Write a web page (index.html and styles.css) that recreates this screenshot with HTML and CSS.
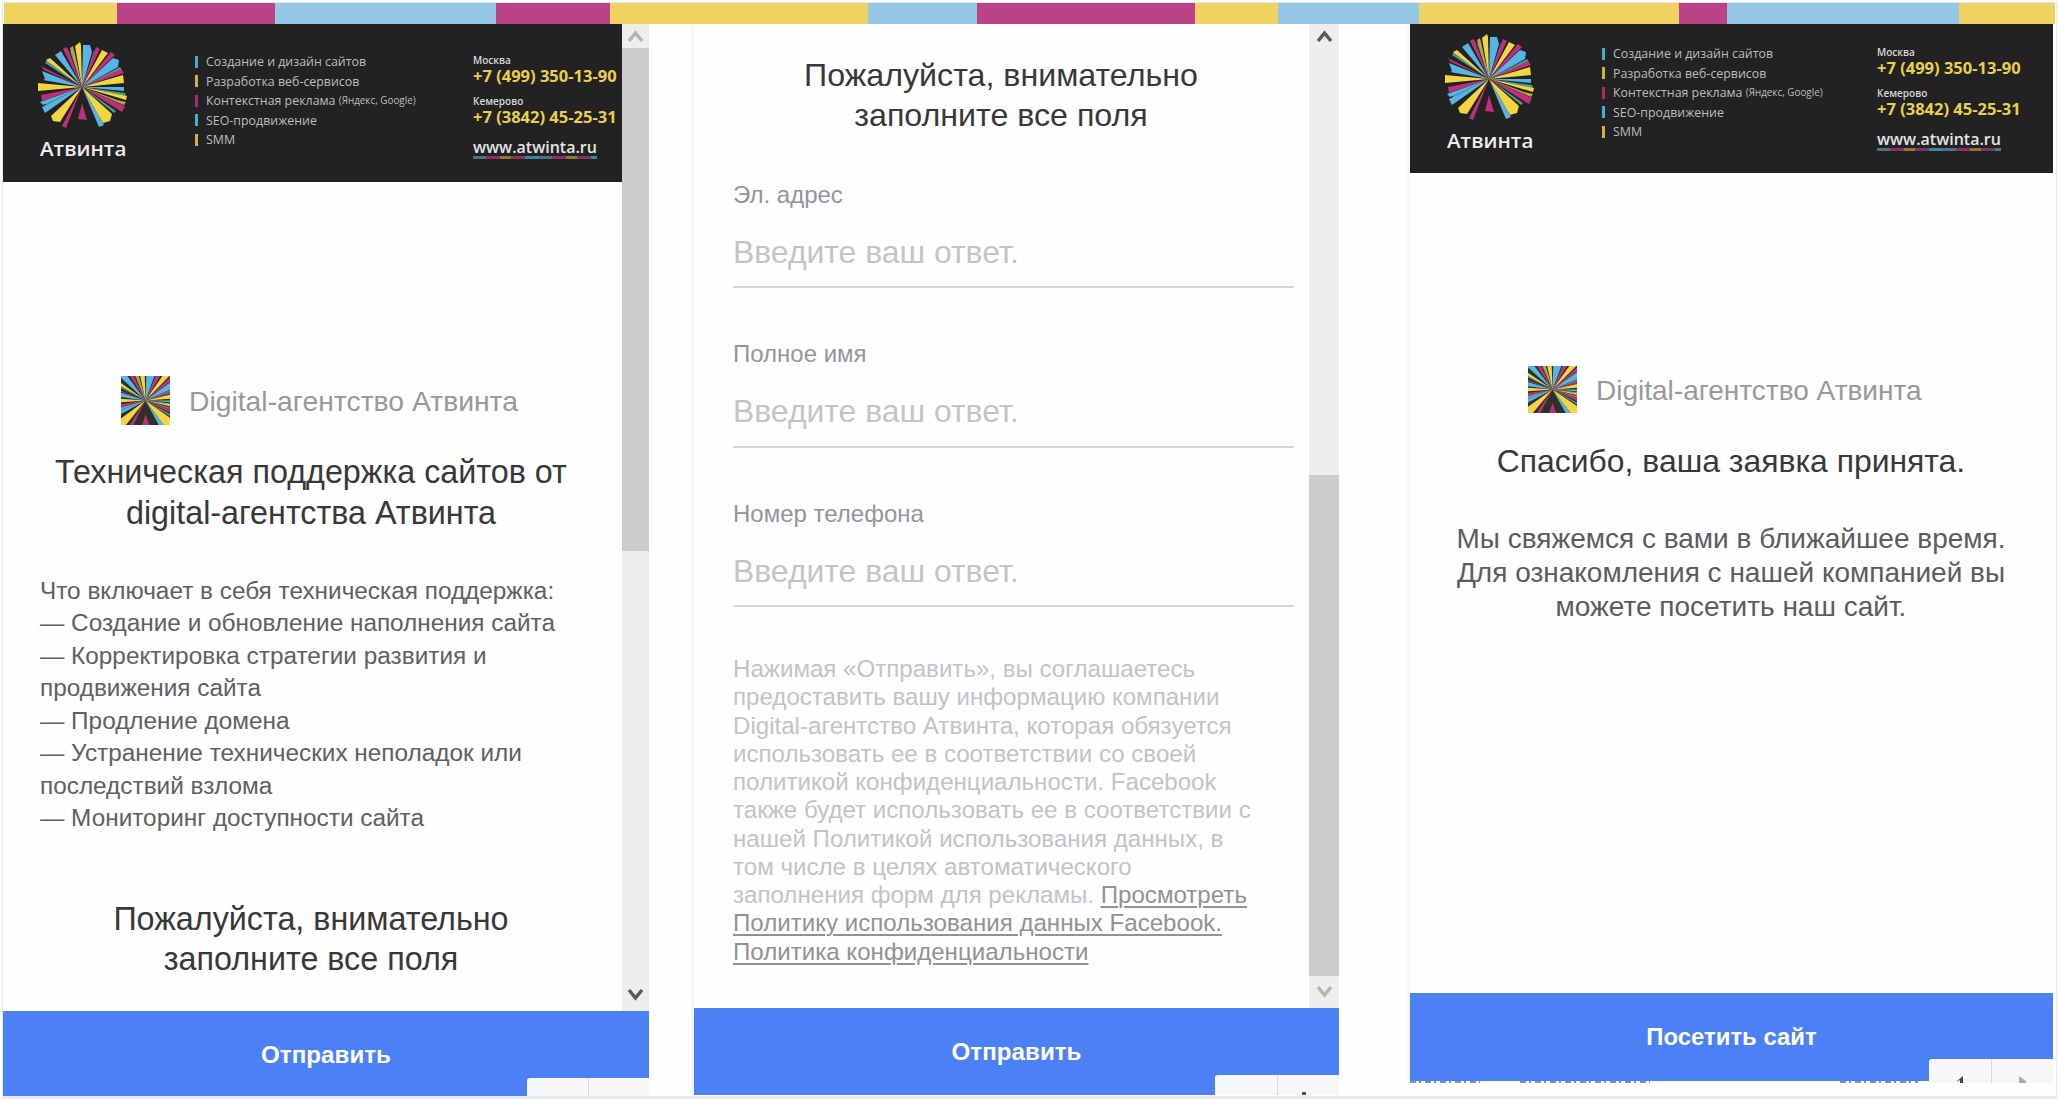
FILE: index.html
```html
<!DOCTYPE html>
<html lang="ru">
  <head>
    <meta charset="UTF-8" />
    <meta name="viewport" content="width=device-width, initial-scale=1.0" />
    <title>Digital-агентство Атвинта</title>
    <link rel="stylesheet" href="styles.css">
  </head>
  <body>
    <!-- Shared logo rays -->
    <svg class="defs" width="0" height="0">
      <symbol id="rays" viewBox="-46 -46 92 92">
        <path fill="#4f9a8a" d="M0 0L-12 -36L-8 -37ZM0 0L12 -36L14 -35ZM0 0L38 -20L40 -17ZM0 0L43 6L44 9ZM0 0L-37 -24L-35 -27ZM0 0L-37 16L-36 18ZM0 0L34 24L32 26Z"/>
        <path fill="#57b5e6" d="M0 0L1 -42L8 -42L10 -35ZM0 0L-27 -32L-21 -36ZM0 0L31 -29L37 -27L36 -20ZM0 0L-40 -16L-37 -8L-39 -7ZM0 0L42 0L42 4ZM0 0L-40 20L-37 26ZM0 0L-42 15L-39 18ZM0 0L17 40L22 38Z"/>
        <path fill="#f2d541" d="M0 0L-7 -41L-2 -45L-1 -42ZM0 0L20 -37L26 -34ZM0 0L-36 -27L-32 -29ZM0 0L41 -12L42 -4ZM0 0L-44 -4L-44 4ZM0 0L45 9L44 13ZM0 0L-31 29L-29 34L-22 35ZM0 0L21 36L28 34L30 27Z"/>
        <path fill="#b8a83c" d="M0 0L-12 -39L-9 -41ZM0 0L35 13L44 15L42 18Z"/>
        <path fill="#bd2f7c" d="M0 0L-19 -38L-16 -40L-14 -38ZM0 0L14 -40L18 -38ZM0 0L29 -35L33 -32ZM0 0L39 -18L42 -14ZM0 0L-41 -21L-38 -17ZM0 0L-41 8L-40 14ZM0 0L43 19L40 25ZM0 0L-20 39L-16 41ZM0 16L-4 32L5 33Z"/>
      </symbol>
    </svg>

    <div class="board">
      <div class="stripe">
        <i class="yellow" style="flex-grow: 113"></i>
        <i class="pink" style="flex-grow: 158"></i>
        <i class="blue" style="flex-grow: 221"></i>
        <i class="pink" style="flex-grow: 114"></i>
        <i class="yellow" style="flex-grow: 258"></i>
        <i class="blue" style="flex-grow: 109"></i>
        <i class="pink" style="flex-grow: 219"></i>
        <i class="yellow" style="flex-grow: 83"></i>
        <i class="blue" style="flex-grow: 141"></i>
        <i class="yellow" style="flex-grow: 260"></i>
        <i class="pink" style="flex-grow: 48"></i>
        <i class="blue" style="flex-grow: 232"></i>
        <i class="yellow" style="flex-grow: 96"></i>
      </div>

      <div class="screens">
        <!-- Screen 1: offer -->
        <section class="screen screen-offer">
          <div class="viewport">
            <div class="content">
              <header class="banner">
                <div class="logo">
                  <svg width="94" height="92"><use href="#rays"/></svg>
                  <span>Атвинта</span>
                </div>
                <ul class="services">
                  <li class="c-blue">Создание и дизайн сайтов</li>
                  <li class="c-yellow">Разработка веб-сервисов</li>
                  <li class="c-pink">Контекстная реклама <small>(Яндекс, Google)</small></li>
                  <li class="c-blue">SEO-продвижение</li>
                  <li class="c-yellow">SMM</li>
                </ul>
                <div class="contacts">
                  <span class="city">Москва</span>
                  <span class="phone">+7 (499) 350-13-90</span>
                  <span class="city">Кемерово</span>
                  <span class="phone">+7 (3842) 45-25-31</span>
                  <span class="site">www.atwinta.ru</span>
                </div>
              </header>
              <div class="brand">
                <svg class="brand-icon" viewBox="-22 -28 44 56" preserveAspectRatio="none"><use href="#rays" x="-46" y="-46" width="92" height="92"/></svg>
                <span>Digital-агентство Атвинта</span>
              </div>
              <h1>Техническая поддержка сайтов от<br>digital-агентства Атвинта</h1>
              <p class="details">
                Что включает в себя техническая поддержка:<br>
                — Создание и обновление наполнения сайта<br>
                — Корректировка стратегии развития и<br>
                продвижения сайта<br>
                — Продление домена<br>
                — Устранение технических неполадок или<br>
                последствий взлома<br>
                — Мониторинг доступности сайта
              </p>
              <h2>Пожалуйста, внимательно<br>заполните все поля</h2>
            </div>
            <div class="scrollbar">
              <span class="arrow muted"><svg width="17" height="14" viewBox="0 0 17 14"><path d="M2 12L8.500 4L15 12"/></svg></span>
              <span class="thumb"></span>
              <span class="arrow"><svg width="17" height="14" viewBox="0 0 17 14"><path d="M2 2L8.500 10L15 2"/></svg></span>
            </div>
          </div>
          <div class="submit">Отправить
            <div class="pager"><span></span><span></span></div>
          </div>
        </section>

        <!-- Screen 2: form -->
        <section class="screen screen-form">
          <div class="viewport">
            <div class="content">
              <h2>Пожалуйста, внимательно<br>заполните все поля</h2>
              <div class="field">
                <label>Эл. адрес</label>
                <div class="input">Введите ваш ответ.</div>
              </div>
              <div class="field">
                <label>Полное имя</label>
                <div class="input">Введите ваш ответ.</div>
              </div>
              <div class="field">
                <label>Номер телефона</label>
                <div class="input">Введите ваш ответ.</div>
              </div>
              <p class="terms">
                Нажимая «Отправить», вы соглашаетесь<br>
                предоставить вашу информацию компании<br>
                Digital-агентство Атвинта, которая обязуется<br>
                использовать ее в соответствии со своей<br>
                политикой конфиденциальности. Facebook<br>
                также будет использовать ее в соответствии с<br>
                нашей Политикой использования данных, в<br>
                том числе в целях автоматического<br>
                заполнения форм для рекламы. <a href="#">Просмотреть<br>
                Политику использования данных Facebook.</a><br>
                <a href="#">Политика конфиденциальности</a>
              </p>
            </div>
            <div class="scrollbar">
              <span class="arrow"><svg width="17" height="14" viewBox="0 0 17 14"><path d="M2 12L8.500 4L15 12"/></svg></span>
              <span class="thumb"></span>
              <span class="arrow muted"><svg width="17" height="14" viewBox="0 0 17 14"><path d="M2 2L8.500 10L15 2"/></svg></span>
            </div>
          </div>
          <div class="submit">Отправить
            <div class="pager"><span></span><span class="mark"></span></div>
          </div>
        </section>

        <!-- Screen 3: thanks -->
        <section class="screen screen-thanks">
          <div class="viewport">
            <div class="content">
              <header class="banner">
                <div class="logo">
                  <svg width="94" height="92"><use href="#rays"/></svg>
                  <span>Атвинта</span>
                </div>
                <ul class="services">
                  <li class="c-blue">Создание и дизайн сайтов</li>
                  <li class="c-yellow">Разработка веб-сервисов</li>
                  <li class="c-pink">Контекстная реклама <small>(Яндекс, Google)</small></li>
                  <li class="c-blue">SEO-продвижение</li>
                  <li class="c-yellow">SMM</li>
                </ul>
                <div class="contacts">
                  <span class="city">Москва</span>
                  <span class="phone">+7 (499) 350-13-90</span>
                  <span class="city">Кемерово</span>
                  <span class="phone">+7 (3842) 45-25-31</span>
                  <span class="site">www.atwinta.ru</span>
                </div>
              </header>
              <div class="brand">
                <svg class="brand-icon" viewBox="-22 -28 44 56" preserveAspectRatio="none"><use href="#rays" x="-46" y="-46" width="92" height="92"/></svg>
                <span>Digital-агентство Атвинта</span>
              </div>
              <h2>Спасибо, ваша заявка принята.</h2>
              <p class="message">Мы свяжемся с вами в ближайшее время.<br>Для ознакомления с нашей компанией вы<br>можете посетить наш сайт.</p>
            </div>
          </div>
          <div class="submit">Посетить сайт
            <div class="pager">
              <span><svg width="9" height="7" viewBox="0 0 9 7"><path fill="#444" d="M8 0V7H5V4L1 6Z"/></svg></span>
              <span><svg width="9" height="7" viewBox="0 0 9 7"><path fill="#aaa" d="M1 0V7H8V5Z"/></svg></span>
            </div>
          </div>
          <div class="cut"><i></i><i></i><i></i></div>
        </section>
      </div>
    </div>
  </body>
</html>
```
FILE: styles.css
```css
* {
  box-sizing: border-box;
}

body {
  margin: 0;
  padding: 2px 2px 0;
  font-family: "Liberation Sans", Arial, sans-serif;
  color: #555;
  background-color: #fff;
}

h1,
h2,
p,
ul {
  margin: 0;
  padding: 0;
}

.defs {
  display: block;
}

.board {
  height: 1097px;
  border: 1px solid #e8e8e8;
  border-bottom: 3px solid #ebebeb;
  background-color: #fefefe;
}

.stripe {
  display: flex;
  height: 21px;
  padding: 0 1px;
}

.stripe i {
  flex: 1 1 0;
}

.yellow {
  background-color: #efd260;
}

.pink {
  background-color: #bb4286;
}

.blue {
  background-color: #95c8e6;
}

.screens {
  display: flex;
  align-items: flex-start;
}

.screen {
  display: flex;
  flex-direction: column;
}

.screen-offer {
  width: 646px;
}

.screen-form {
  width: 648px;
  margin-left: 42px;
  border-left: 3px solid #f7f7f7;
}

.screen-thanks {
  width: 646px;
  margin-left: 68px;
  border-left: 3px solid #f7f7f7;
}

.viewport {
  display: flex;
  height: 987px;
}

.screen-form .viewport {
  height: 984px;
}

.screen-thanks .viewport {
  height: 969px;
}

.content {
  flex: 1;
  white-space: nowrap;
}

/* Banner */
.banner {
  display: flex;
  height: 158px;
  padding-top: 17px;
  overflow: hidden;
  background-color: #222;
  font-family: "Open Sans", "Noto Sans", sans-serif;
}

.screen-thanks .banner {
  height: 149px;
  padding-top: 9px;
}

.logo {
  display: flex;
  flex-direction: column;
  width: 94px;
  margin-left: 32px;
}

.logo span {
  margin: -2px 0 0 5px;
  font-size: 20.6px;
  font-weight: 600;
  line-height: 34px;
  color: #ededed;
}

.services {
  width: 278px;
  margin: 11px 0 0 66px;
  list-style: none;
  font-size: 12.4px;
  line-height: 19.5px;
  color: #bdbdbd;
}

.services li {
  display: flex;
  align-items: center;
  white-space: pre;
}

.services li::before {
  content: "";
  width: 3px;
  height: 12px;
  margin-right: 8px;
}

.services small {
  font-size: 9.9px;
}

.c-blue::before {
  background-color: #4aa9cf;
}

.c-yellow::before {
  background-color: #cdb33d;
}

.c-pink::before {
  background-color: #a82c72;
}

.contacts {
  display: flex;
  flex-direction: column;
  align-items: flex-start;
  margin-top: 12px;
}

.screen-thanks .services {
  width: 275px;
}

.city {
  font-size: 10px;
  font-weight: 600;
  line-height: 14px;
  color: #d8d8d8;
}

.phone {
  margin-bottom: 10px;
  font-size: 16.5px;
  font-weight: 700;
  line-height: 17px;
  color: #ead04a;
}

.site {
  margin-top: 3px;
  font-size: 16px;
  font-weight: 600;
  line-height: 18px;
  color: #e4e4e4;
}

.site::after {
  content: "";
  display: block;
  height: 3px;
  background: repeating-linear-gradient(90deg, #4d7180 0 13px, #8f2e66 13px 27px, #8a7a35 27px 38px, #7b3560 38px 52px, #3b86a8 52px 66px);
}

/* Agency name */
.brand {
  display: flex;
  align-items: center;
  height: 49px;
  margin-top: 194px;
  padding-left: 118px;
  font-size: 28.3px;
  line-height: 1;
  color: #999;
}

.brand span {
  padding-top: 2px;
}

.brand-icon {
  width: 49px;
  height: 49px;
  margin-right: 19px;
  background-color: #2e3029;
}

h1,
h2 {
  font-size: 32.3px;
  font-weight: normal;
  line-height: 40.5px;
  text-align: center;
  color: #383838;
}

h1 {
  margin-top: 27px;
}

.screen-offer h1,
.screen-offer h2 {
  padding-right: 3px;
}

.details {
  margin-top: 41.5px;
  padding-left: 37px;
  font-size: 24.35px;
  line-height: 32.5px;
  color: #606060;
}

.screen-offer h2 {
  margin-top: 64px;
}

/* Scrollbar */
.scrollbar {
  display: flex;
  flex-direction: column;
  width: 27px;
  background-color: #eee;
}

.arrow {
  display: flex;
  justify-content: center;
  align-items: center;
  height: 24px;
}

.arrow path {
  fill: none;
  stroke: #5a5a5a;
  stroke-width: 3.5;
}

.arrow.muted path {
  stroke: #b4b4b4;
}

.thumb {
  height: 503px;
  margin-bottom: auto;
  background-color: #cdcdcd;
}

.thumb + .arrow {
  height: 32px;
}

.screen-form .scrollbar {
  width: 30px;
}

.screen-form .thumb {
  height: 501px;
  margin: auto 0 0;
}

/* Form */
.screen-form .content {
  padding: 0 15px 0 39px;
}

.screen-form h2 {
  margin: 0 10px 45px -15px;
  padding-top: 30.5px;
  font-size: 32.2px;
}

.field {
  height: 107.5px;
  margin-bottom: 52px;
  border-bottom: 2px solid #d6d6d6;
}

.field label {
  display: block;
  font-size: 24px;
  line-height: 28px;
  color: #92959c;
}

.input {
  margin-top: 23px;
  font-size: 31.9px;
  line-height: 40px;
  color: #c4c4c4;
}

.terms {
  margin-top: -4px;
  font-size: 24.1px;
  line-height: 28.25px;
  color: #c2c3c6;
}

.terms a {
  color: #929292;
  text-underline-offset: 3px;
  text-decoration-thickness: 2px;
}

/* Thanks */
.screen-thanks .brand {
  height: 47px;
  margin-top: 193px;
  font-size: 28px;
}

.screen-thanks .brand-icon {
  height: 47px;
}

.screen-thanks h2 {
  margin-top: 28px;
  padding-right: 1px;
  font-size: 31.9px;
  line-height: 40px;
}

.message {
  margin-top: 41px;
  padding-right: 1px;
  font-size: 28px;
  line-height: 34px;
  text-align: center;
  color: #5c5c5c;
}

/* Bottom button */
.submit {
  position: relative;
  display: flex;
  justify-content: center;
  align-items: center;
  height: 85px;
  font-size: 24.2px;
  font-weight: bold;
  color: #fff;
  background-color: #4c80f5;
}

.screen-offer .submit {
  padding-top: 3px;
}

.screen-form .submit {
  height: 87px;
}

.screen-thanks .submit {
  height: 88px;
  font-size: 23.9px;
}

/* Pager sits over the button's corner */
.pager {
  position: absolute;
  right: 0;
  bottom: 0;
  display: flex;
  width: 122px;
  height: 18px;
  border-top-left-radius: 3px;
  overflow: hidden;
  background-color: #f6f7f9;
}

.pager span {
  display: flex;
  flex: 1;
  justify-content: center;
  align-items: flex-end;
}

.pager span + span {
  border-left: 1px solid #d9dadd;
}

.pager .mark::after {
  content: "";
  width: 4px;
  height: 3px;
  margin-right: 8px;
  background-color: #555;
}

.screen-form .pager {
  width: 124px;
  height: 20px;
}

.screen-thanks .pager {
  bottom: -2px;
  width: 124px;
  height: 24px;
}

/* Top edge of the line hidden under the button */
.cut {
  display: flex;
  height: 2px;
}

.cut i {
  width: 70px;
  background: repeating-linear-gradient(90deg, #7b90c4 0 6px, #fff 6px 9px, #7b90c4 9px 11px, #fff 11px 15px);
}

.cut i:nth-child(2) {
  width: 130px;
  margin-left: 40px;
}

.cut i:nth-child(3) {
  width: 78px;
  margin-left: 190px;
}
```
